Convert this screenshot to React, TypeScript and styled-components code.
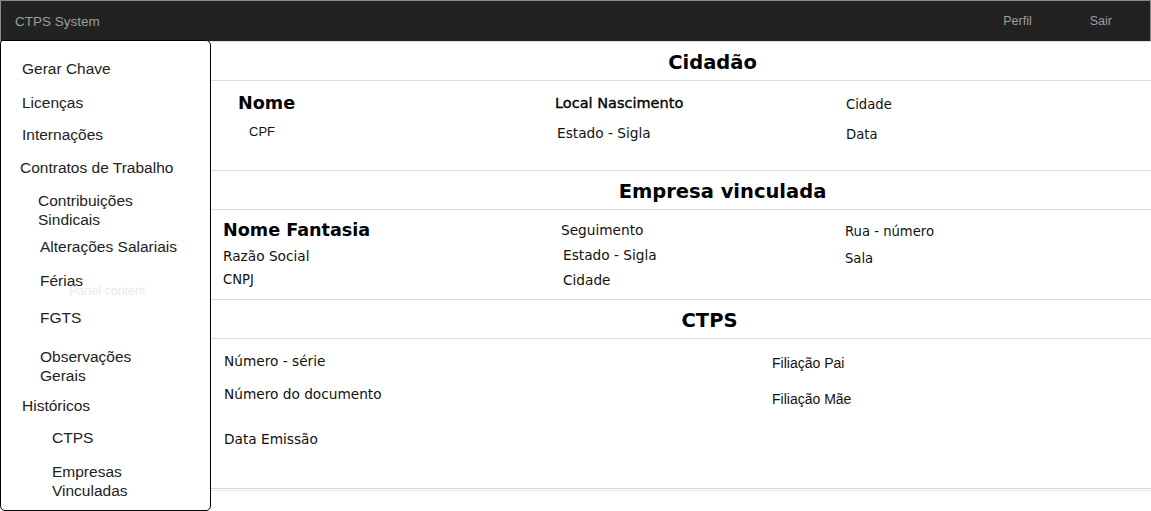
import React from "react";
import styled, { createGlobalStyle, css } from "styled-components";

const Global = createGlobalStyle`
  html, body { margin: 0; padding: 0; background: #fff; }
  body { font-family: "DejaVu Sans", Verdana, sans-serif; color: #111; }
  * { box-sizing: border-box; }
`;

const Page = styled.div`
  position: relative;
  width: 1151px;
  height: 511px;
  overflow: hidden;
`;

const NavBar = styled.header`
  height: 41px;
  background: #222;
  border: 1px solid #8a8a8a;
  border-bottom: none;
  display: flex;
  align-items: center;
  font-family: "Liberation Sans", Arial, sans-serif;
  color: #9d9d9d;
`;

const Brand = styled.div`
  padding-left: 14px;
  font-size: 13.5px;
  flex: 1;
`;

const NavLinks = styled.nav`
  display: flex;
  margin-right: 9px;
`;

const NavLink = styled.span`
  padding: 0 29px;
  font-size: 12.5px;
`;

const Main = styled.main`
  display: flex;
  flex-direction: column;
`;

const Header = styled.div<{ $pl: number }>`
  height: 40px;
  border-top: 1px solid #dedede;
  border-bottom: 1px solid #dedede;
  display: flex;
  align-items: center;
  justify-content: center;
  padding-left: ${(p) => p.$pl}px;
  padding-top: 2px;
  font-size: 19.5px;
  font-weight: bold;
  color: #000;
`;

const Body = styled.div<{ $h: number; $pl: number; $cols: string }>`
  height: ${(p) => p.$h}px;
  padding-left: ${(p) => p.$pl}px;
  padding-top: 1px;
  display: grid;
  grid-template-columns: ${(p) => p.$cols};
  align-items: start;
`;

const Column = styled.div`
  display: flex;
  flex-direction: column;
  align-items: flex-start;
`;

type Variant = "lead" | "sub" | "text" | "textSm" | "arial" | "arialSm";

const variants: Record<Variant, ReturnType<typeof css>> = {
  lead: css`font-size: 17.6px; font-weight: bold; line-height: 24px; color: #000;`,
  sub: css`font-size: 14.5px; line-height: 20px; color: #000; -webkit-text-stroke: 0.35px #000;`,
  text: css`font-size: 13.7px; line-height: 20px; color: #111;`,
  textSm: css`font-size: 13.2px; line-height: 20px; color: #111;`,
  arial: css`font-family: "Liberation Sans", Arial, sans-serif; font-size: 14px; line-height: 20px; color: #111;`,
  arialSm: css`font-family: "Liberation Sans", Arial, sans-serif; font-size: 13px; line-height: 20px; color: #111;`,
};

const Field = styled.div<{ $mt: number; $indent?: number; $v: Variant }>`
  margin-top: ${(p) => p.$mt}px;
  margin-left: ${(p) => p.$indent ?? 0}px;
  white-space: nowrap;
  ${(p) => variants[p.$v]}
`;

const Footer = styled.div`
  height: 3px;
  border-top: 1px solid #d4d4d4;
  border-bottom: 1px solid #e6e6e6;
`;

const Sidebar = styled.aside`
  position: absolute;
  left: 0;
  top: 40px;
  width: 211px;
  height: 471px;
  background: #fff;
  border: 1px solid #000;
  border-radius: 3px 5px 5px 5px;
  padding-top: 18px;
  display: flex;
  flex-direction: column;
  font-family: "Liberation Sans", Arial, sans-serif;
  font-size: 15.5px;
  color: #222;
`;

const MenuItem = styled.div<{ $mt: number; $indent: number }>`
  position: relative;
  margin-top: ${(p) => p.$mt}px;
  padding-left: ${(p) => p.$indent}px;
  line-height: 19px;
`;

const Ghost = styled.span`
  position: absolute;
  left: 68px;
  top: 11px;
  font-size: 12.5px;
  color: #e9e9e9;
  white-space: nowrap;
  pointer-events: none;
`;

export default function App() {
  return (
    <Page>
      <Global />
      <NavBar>
        <Brand>CTPS System</Brand>
        <NavLinks>
          <NavLink>Perfil</NavLink>
          <NavLink>Sair</NavLink>
        </NavLinks>
      </NavBar>
      <Main>
        <Header $pl={274}>Cidadão</Header>
        <Body $h={89} $pl={238} $cols="317px 291px 1fr">
          <Column>
            <Field $v="lead" $mt={9}>Nome</Field>
            <Field $v="arialSm" $mt={7} $indent={11}>CPF</Field>
          </Column>
          <Column>
            <Field $v="sub" $mt={11}>Local Nascimento</Field>
            <Field $v="text" $mt={10} $indent={2}>Estado - Sigla</Field>
          </Column>
          <Column>
            <Field $v="textSm" $mt={13}>Cidade</Field>
            <Field $v="textSm" $mt={10}>Data</Field>
          </Column>
        </Body>
        <Header $pl={294}>Empresa vinculada</Header>
        <Body $h={89} $pl={223} $cols="338px 284px 1fr">
          <Column>
            <Field $v="lead" $mt={7}>Nome Fantasia</Field>
            <Field $v="text" $mt={4}>Razão Social</Field>
            <Field $v="textSm" $mt={4}>CNPJ</Field>
          </Column>
          <Column>
            <Field $v="text" $mt={9}>Seguimento</Field>
            <Field $v="text" $mt={5} $indent={2}>Estado - Sigla</Field>
            <Field $v="text" $mt={5} $indent={2}>Cidade</Field>
          </Column>
          <Column>
            <Field $v="textSm" $mt={11}>Rua - número</Field>
            <Field $v="textSm" $mt={7}>Sala</Field>
          </Column>
        </Body>
        <Header $pl={268}>CTPS</Header>
        <Body $h={149} $pl={224} $cols="548px 1fr">
          <Column>
            <Field $v="text" $mt={11}>Número - série</Field>
            <Field $v="text" $mt={13}>Número do documento</Field>
            <Field $v="text" $mt={25}>Data Emissão</Field>
          </Column>
          <Column>
            <Field $v="arial" $mt={13}>Filiação Pai</Field>
            <Field $v="arial" $mt={16}>Filiação Mãe</Field>
          </Column>
        </Body>
        <Footer />
      </Main>
      <Sidebar>
        <MenuItem $mt={0} $indent={21}>Gerar Chave</MenuItem>
        <MenuItem $mt={15} $indent={21}>Licenças</MenuItem>
        <MenuItem $mt={13} $indent={21}>Internações</MenuItem>
        <MenuItem $mt={14} $indent={19}>Contratos de Trabalho</MenuItem>
        <MenuItem $mt={14} $indent={37}>Contribuições<br />Sindicais</MenuItem>
        <MenuItem $mt={8} $indent={39}>Alterações Salariais</MenuItem>
        <MenuItem $mt={15} $indent={39}>
          Férias
          <Ghost>Panel content</Ghost>
        </MenuItem>
        <MenuItem $mt={18} $indent={39}>FGTS</MenuItem>
        <MenuItem $mt={20} $indent={39}>Observações<br />Gerais</MenuItem>
        <MenuItem $mt={11} $indent={21}>Históricos</MenuItem>
        <MenuItem $mt={13} $indent={51}>CTPS</MenuItem>
        <MenuItem $mt={15} $indent={51}>Empresas<br />Vinculadas</MenuItem>
      </Sidebar>
    </Page>
  );
}
